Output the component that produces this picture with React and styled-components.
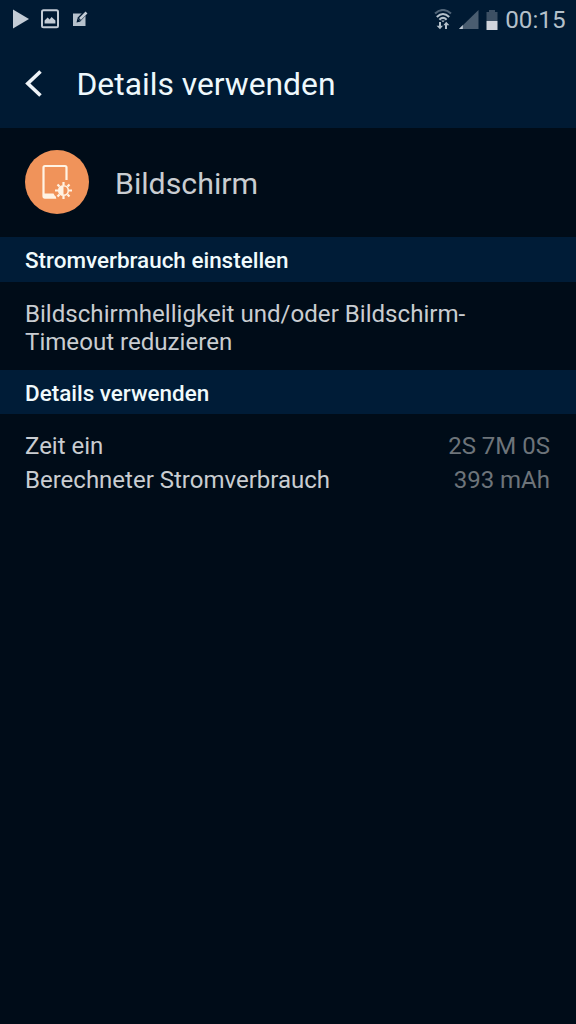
import React from 'react'
import styled, { createGlobalStyle } from 'styled-components'

const sections = {
  adjust: 'Stromverbrauch einstellen',
  details: 'Details verwenden',
}

const usage = [
  { label: 'Zeit ein', value: '2S 7M 0S' },
  { label: 'Berechneter Stromverbrauch', value: '393 mAh' },
]

export default function App() {
  return (
    <Screen>
      <GlobalStyle />
      <StatusBar>
        <Notifications>
          <svg width="17" height="20" viewBox="0 0 17 20">
            <path d="M1 .5L17 10L1 19.5z" fill="#c3ccd6" />
          </svg>
          <svg width="18" height="20" viewBox="0 0 18 20">
            <rect x="1" y="1.2" width="16" height="17" rx="1.5" fill="none" stroke="#c3ccd6" strokeWidth="2" />
            <path d="M3.6 14.4v-3l3-3 2 2 2-2.4 3.8 3.6v2.8z" fill="#c3ccd6" />
          </svg>
          <svg width="17" height="17" viewBox="0 0 17 17">
            <path d="M2 2.5h12.500V15H2z" fill="#b6c1cc" />
            <path d="M16 0L8 8.500" stroke="#001a33" strokeWidth="4.600" />
            <path d="M15.500 1.500L9 8" stroke="#c3ccd6" strokeWidth="2.600" fill="none" />
            <path d="M5.500 11.500l1-4.200 3.200 3.200z" fill="#001a33" />
          </svg>
        </Notifications>
        <System>
          <svg width="18" height="21" viewBox="0 0 18 21">
            <g fill="none" strokeWidth="2.1">
              <path d="M1 4.5Q9-2.5 17 4.5" stroke="#506477" />
              <path d="M2.800 7.900Q9 2.100 15.200 7.900" stroke="#b4c0ca" />
              <path d="M5.400 10.700Q9 7.200 12.600 10.700" stroke="#b4c0ca" />
            </g>
            <path d="M7.200 11.400h3.600L9 13.200z" fill="#b4c0ca" />
            <path d="M5 13v3.800H2.600L6 20.300l3-3.500H7V13zM11 20v-3.800H9.300l2.900-3.500 3.200 3.500H13V20z" fill="#b4c0ca" />
          </svg>
          <svg width="20" height="19" viewBox="0 0 20 19">
            <path d="M19.500 0v19H0z" fill="#4a5d70" />
            <path d="M3.800 15V19H0z" fill="#c3ccd6" />
          </svg>
          <svg width="12" height="20" viewBox="0 0 12 20">
            <path d="M3 0h6v2h2.500v9H.5V2H3z" fill="#3d5064" />
            <path d="M.5 11h11v9H.5z" fill="#d0d4dc" />
          </svg>
          <Clock>00:15</Clock>
        </System>
      </StatusBar>
      <TitleBar>
        <svg width="18" height="28" viewBox="0 0 18 28">
          <path d="M15.500 1.500L2.800 13.500l12.700 12" fill="none" stroke="#eef3f7" strokeWidth="3.600" />
        </svg>
        <h1>Details verwenden</h1>
      </TitleBar>
      <AppRow>
        <AppIcon>
          <svg width="64" height="64" viewBox="0 0 64 64">
            <path d="M31 47.500H20q-1.500 0-1.500-1.500V17.500q0-1.500 1.500-1.500h20q1.500 0 1.500 1.500v12.500" fill="none" stroke="#fff3e4" strokeWidth="2.200" />
            <path d="M18 43.500h10.500l3 5H20q-2 0-2-2z" fill="#fff3e4" />
            <g fill="none" stroke="#fff3e4" strokeWidth="2.200">
              <circle cx="38.500" cy="40.500" r="4.800" strokeWidth="1.600" />
              <path d="M38.500 32v3M38.500 46v3M30 40.500h3M44 40.500h3M32.500 34.500l2 2M42.500 44.500l2 2M44.500 34.500l-2 2M34.500 44.500l-2 2" />
            </g>
            <path d="M38.500 35.700a4.800 4.800 0 0 0 0 9.600z" fill="#fff3e4" />
          </svg>
        </AppIcon>
        <h2>Bildschirm</h2>
      </AppRow>
      <SectionHeader $height={45}>{sections.adjust}</SectionHeader>
      <Hint>
        Bildschirmhelligkeit und/oder Bildschirm-
        <br />
        Timeout reduzieren
      </Hint>
      <SectionHeader $height={44}>{sections.details}</SectionHeader>
      <UsageList>
        {usage.map((item) => (
          <UsageRow key={item.label}>
            <span>{item.label}</span>
            <Value>{item.value}</Value>
          </UsageRow>
        ))}
      </UsageList>
    </Screen>
  )
}
// styled-components

const GlobalStyle = createGlobalStyle`
*{
  box-sizing: border-box;
}
body{
  margin: 0;
  background-color: #000c18;
}
`

const Screen = styled.div`
min-height: 100vh;
background-color: #000c18;
color: #c9cdd1;
font-family: Roboto, sans-serif;
svg{
  display: block;
  flex: none;
}
h1, h2{
  margin: 0;
  font-weight: 400;
}
`

const StatusBar = styled.div`
height: 40px;
display: flex;
justify-content: space-between;
padding: 0 10.5px 0 12px;
background-color: #001a33;
`

const Notifications = styled.div`
height: 38px;
display: flex;
align-items: center;
gap: 12px;
`

const System = styled.div`
height: 39px;
display: flex;
align-items: center;
gap: 7px;
`

const Clock = styled.span`
color: #b4c0ca;
font-size: 24.2px;
line-height: 40px;
`

const TitleBar = styled.div`
height: 88px;
display: flex;
align-items: center;
gap: 33.5px;
padding-left: 25px;
background-color: #001a33;
h1{
  color: #eef8fc;
  font-size: 31.8px;
  line-height: 88px;
}
`

const AppRow = styled.div`
height: 109px;
display: flex;
align-items: center;
gap: 26px;
padding-left: 25px;
h2{
  padding-top: 2px;
  font-size: 30.3px;
  line-height: 109px;
}
`

const AppIcon = styled.div`
width: 64px;
height: 64px;
margin-bottom: 1px;
border-radius: 50%;
background-color: #f0935a;
`

const SectionHeader = styled.div`
height: ${(props) => props.$height}px;
padding-left: 25px;
background-color: #001c37;
color: #f0fafc;
font-size: 22.45px;
font-weight: 500;
line-height: 47px;
`

const Hint = styled.p`
height: 88px;
margin: 0;
padding: 18px 25px 0;
font-size: 24.1px;
line-height: 28px;
white-space: nowrap;
`

const UsageList = styled.div`
padding: 15px 26px 15px 25px;
`

const UsageRow = styled.div`
display: flex;
justify-content: space-between;
font-size: 24px;
line-height: 34px;
`

const Value = styled.span`
color: #6d747a;
`
